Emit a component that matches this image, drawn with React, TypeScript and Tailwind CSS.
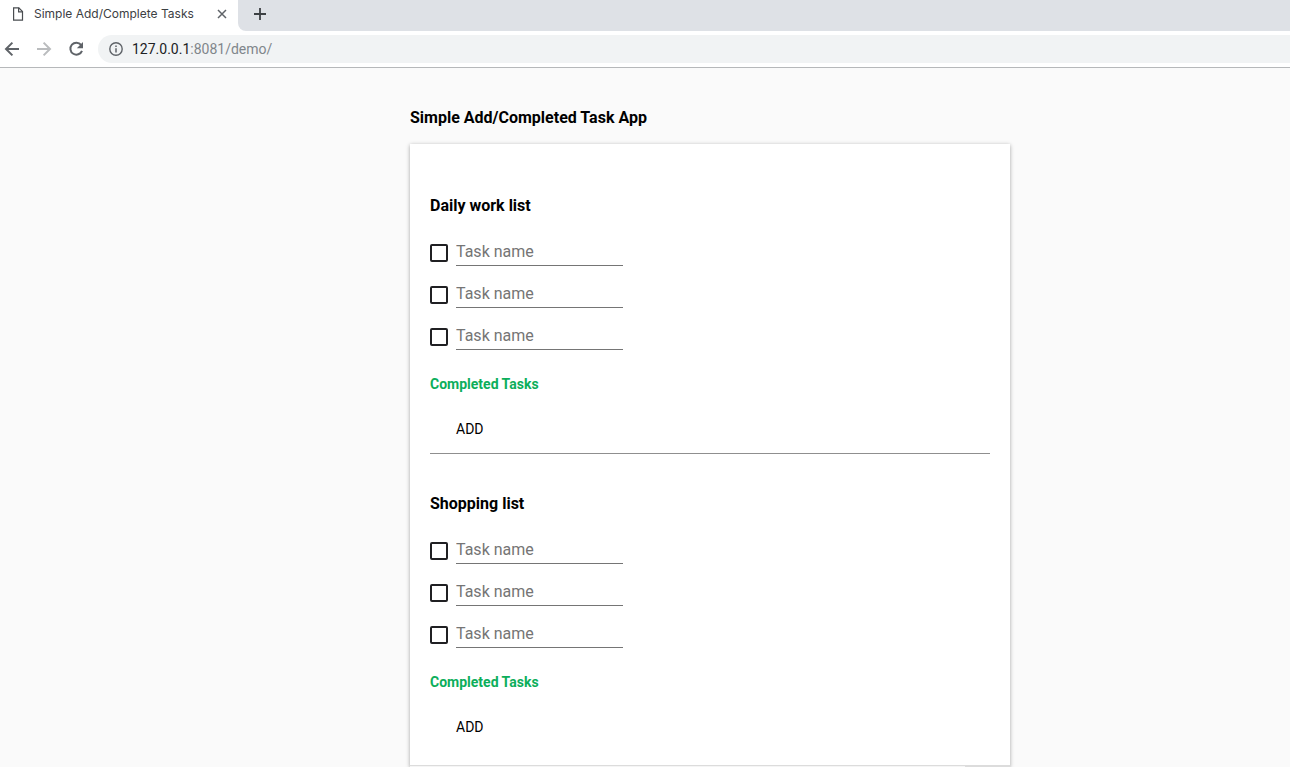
import { useState } from "react";

const lists = [
  { id: "daily", title: "Daily work list", tasks: 3 },
  { id: "shopping", title: "Shopping list", tasks: 3 },
];

function TabStrip() {
  return (
    <div className="flex h-[31px] bg-white">
      <div className="flex w-[238px] shrink-0 items-center rounded-t-lg bg-white pb-1 pl-3 pr-[10px]">
        <svg className="h-[14px] w-3 shrink-0" viewBox="0 0 12 14" fill="none" stroke="#4a4d51" strokeWidth="1.2" aria-hidden="true">
          <path d="M1.6.8h5.2l3.7 3.7v8.7H1.6z" />
          <path d="M6.6.8v4h3.9" />
        </svg>
        <span className="ml-[10px] flex-1 whitespace-nowrap font-['Inter',sans-serif] text-[12px] leading-4 text-[#3c4043]">
          Simple Add/Complete Tasks
        </span>
        <button type="button" aria-label="Close tab" className="flex h-3 w-3 items-center justify-center">
          <svg className="h-[10px] w-[10px]" viewBox="0 0 10 10" stroke="#5f6368" strokeWidth="1.5" aria-hidden="true">
            <path d="M1 1l8 8M9 1L1 9" />
          </svg>
        </button>
      </div>
      <div className="flex flex-1 items-center rounded-bl-lg bg-[#dee1e6] pb-[3px] pl-4">
        <button type="button" aria-label="New tab" className="flex h-3 w-3 items-center justify-center">
          <svg className="h-3 w-3" viewBox="0 0 12 12" stroke="#3c4043" strokeWidth="1.8" aria-hidden="true">
            <path d="M6 0v12M0 6h12" />
          </svg>
        </button>
      </div>
    </div>
  );
}

function Toolbar() {
  return (
    <div className="flex h-[37px] items-center border-b border-[#b6b8ba] bg-white pl-1">
      <button type="button" aria-label="Back" className="h-4 w-4">
        <svg viewBox="0 0 16 16" fill="none" stroke="#5f6368" strokeWidth="2" aria-hidden="true">
          <path d="M15 8H2.4M8.4 1.6L2 8l6.4 6.4" />
        </svg>
      </button>
      <button type="button" aria-label="Forward" className="ml-4 h-4 w-4">
        <svg viewBox="0 0 16 16" fill="none" stroke="#babcbe" strokeWidth="2" aria-hidden="true">
          <path d="M1 8h12.6M7.6 1.6L14 8l-6.4 6.4" />
        </svg>
      </button>
      <button type="button" aria-label="Reload" className="ml-4 h-4 w-4">
        <svg viewBox="0 0 16 16" aria-hidden="true">
          <path d="M13.1 3.9A6 6 0 1 0 14 9.8" fill="none" stroke="#5f6368" strokeWidth="2" />
          <path d="M15 1v6.2H8.8z" fill="#5f6368" />
        </svg>
      </button>
      <div className="ml-[14px] flex h-7 flex-1 items-center rounded-l-full bg-[#f1f3f4] pl-[11px]">
        <svg className="h-[14px] w-[14px]" viewBox="0 0 14 14" fill="none" stroke="#5f6368" aria-hidden="true">
          <circle cx="7" cy="7" r="6.2" strokeWidth="1.4" />
          <path d="M7 6.2v4.3M7 3.4v1.5" strokeWidth="1.5" />
        </svg>
        <span className="ml-[9px] text-[14px] leading-5 text-[#80868b]">
          <span className="text-[#202124]">127.0.0.1</span>:8081/demo/
        </span>
      </div>
    </div>
  );
}

function TaskRow({ id }: { id: string }) {
  const [name, setName] = useState("");
  return (
    <li className="flex h-[26px] items-center gap-2">
      <input
        id={id}
        type="checkbox"
        aria-label="Mark task as completed"
        className="h-[18px] w-[18px] shrink-0 appearance-none rounded-[2px] border-2 border-[#202023] checked:bg-[#202023]"
      />
      <input
        type="text"
        aria-label="Task name"
        placeholder="Task name"
        value={name}
        onChange={(e) => setName(e.target.value)}
        className="h-[26px] w-[167px] border-b border-[#757575] bg-transparent pb-[2px] text-[16px] leading-5 text-black outline-none placeholder:text-[#757575]"
      />
    </li>
  );
}

function TaskList({ id, title, tasks }: { id: string; title: string; tasks: number }) {
  return (
    <section>
      <h2 className="text-[16px] font-bold leading-6">{title}</h2>
      <ul className="mt-[22px] flex flex-col gap-4">
        {Array.from({ length: tasks }, (_, i) => (
          <TaskRow key={i} id={`${id}-${i}`} />
        ))}
      </ul>
      <h3 className="mt-6 text-[14px] font-bold leading-5 text-[#0cae5b]">Completed Tasks</h3>
      <button type="button" className="ml-[26px] mt-[25px] block text-[14px] leading-5">
        ADD
      </button>
    </section>
  );
}

export default function App() {
  return (
    <div className="flex min-h-screen flex-col bg-[#fafafa] font-['Roboto',sans-serif] text-black">
      <header>
        <TabStrip />
        <Toolbar />
      </header>
      <main className="pl-[410px]">
        <h1 className="pt-[38px] text-[16px] font-bold leading-6">Simple Add/Completed Task App</h1>
        <div className="mt-[14px] max-w-[600px] bg-white shadow-[0_1px_4px_rgba(0,0,0,0.35)]">
          <div className="px-5 pb-[28px] pt-[50px]">
            <TaskList {...lists[0]} />
            <hr className="mb-[38px] mt-[14px] border-[#8f8f8f]" />
            <TaskList {...lists[1]} />
          </div>
          <div className="flex border-t border-[#dcdcdc] bg-[#f5f5f5]">
            <div className="ml-auto h-px w-[45px] bg-[#dcdcdc]" />
          </div>
        </div>
      </main>
    </div>
  );
}
